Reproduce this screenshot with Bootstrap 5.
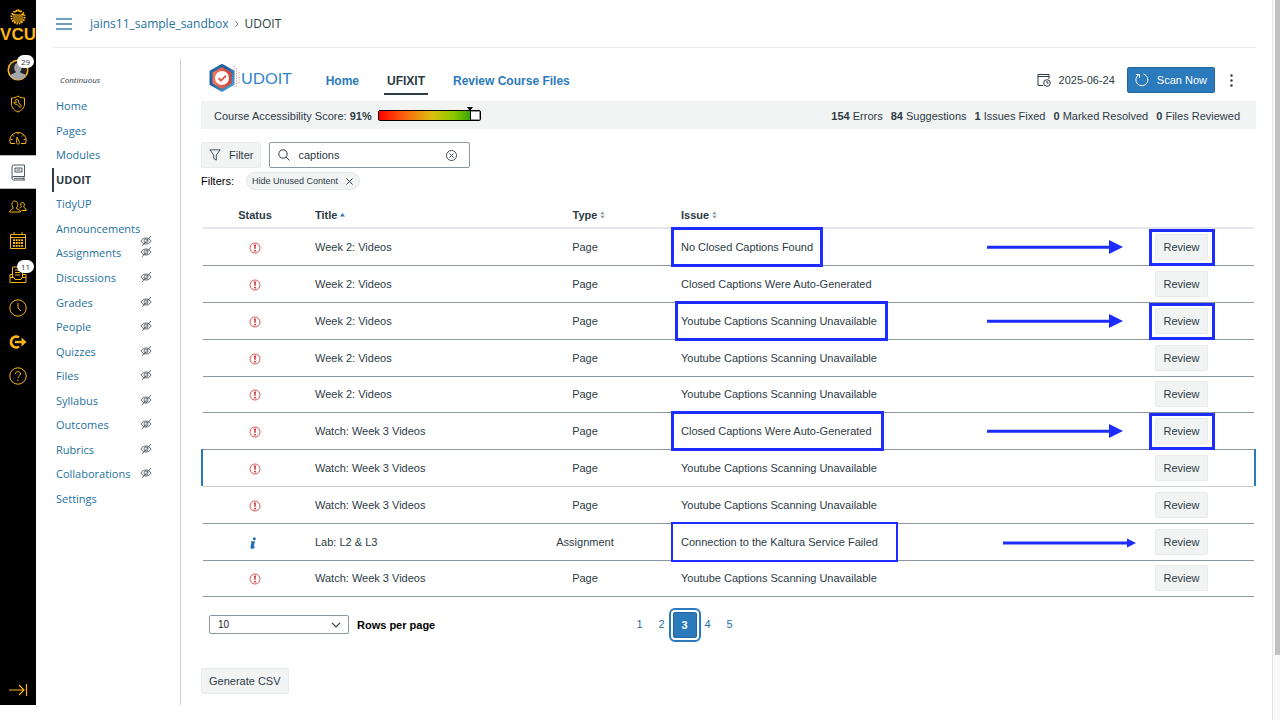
<!DOCTYPE html>
<html lang="en">
<head>
<meta charset="utf-8">
<meta name="viewport" content="width=device-width, initial-scale=1">
<title>UDOIT</title>
<link href="https://cdn.jsdelivr.net/npm/bootstrap@5.3.0/dist/css/bootstrap.min.css" rel="stylesheet">
<style>
:root{--ink:#2d3b45;--link:#25719f;--brand:#2b7abc;--gold:#fdb515;--soft:#f2f4f4;--callout:#1d2cff}
body{font-family:"Liberation Sans",Arial,sans-serif;font-size:11px;line-height:16px;color:var(--ink);background:#fff}
a{text-decoration:none;color:var(--link)}
svg{display:block;flex:none}
.shell{height:calc(100vh - 15px)}
.rail{width:36px;background:#000;color:var(--gold)}
.rail a{height:34px;color:inherit}
.rail .crest{height:52px;padding-top:9px}
.rail .avatar{height:35px}
.rail .current{background:#fff;color:#4c5660;border-block:1px solid #bbb}
.rail .expand{height:30px}
.count{top:3px;left:17px;width:17px;height:13px;border-radius:7px;background:#fff;color:#333;font:8px/13px "Open Sans",sans-serif;text-align:center}
.crumbs{height:48px;margin:0 16px;border-bottom:1px solid #e8eaec;font:12px/18px "Open Sans",sans-serif;gap:18px}
.trail{gap:6px}
.menu{width:145px;margin-top:11px;border-right:1px solid #c7cdd1;font:11px/24px "Open Sans",sans-serif;padding-left:16px}
.term{font-size:8px;line-height:14px;padding:14px 0 7px 8px}
.links{min-height:417px}
.links li{height:24px;padding-left:4px;padding-right:28px}
.links li svg{margin-bottom:2px}
.links .here{border-left:2px solid var(--ink);padding-left:2px}
.links .here a{color:var(--ink);font-weight:700}
.links .low svg{margin-top:26px}
.stage{padding:11px 16px 0 20px}
.tabs{height:42px}
.views{gap:22px;padding-left:27px}
.wordmark{font:16px/22px Lato,sans-serif;color:#2f86cc}
.tab{font-size:12px;font-weight:700;line-height:16px;padding:4px 3px;border-bottom:2px solid transparent;color:var(--brand)}
.tab.on{color:var(--ink);border-color:var(--ink)}
.btn{--bs-btn-font-size:11px;--bs-btn-line-height:16px;--bs-btn-padding-y:4px;--bs-btn-padding-x:7px;--bs-btn-border-radius:2px}
.btn-soft{--bs-btn-bg:var(--soft);--bs-btn-color:var(--ink);--bs-btn-border-color:#e8ebec;--bs-btn-hover-bg:#e6eaea;--bs-btn-hover-color:var(--ink)}
.btn-scan{--bs-btn-bg:var(--brand);--bs-btn-color:#fff;--bs-btn-border-color:#2368a3;--bs-btn-hover-bg:#2368a3;--bs-btn-hover-color:#fff}
.scorebar{height:28px;background:var(--soft);padding:2px 16px 0 13px;gap:6px}
.tallies{gap:8px}
.gauge{width:103px;height:11px;margin-bottom:2px;border:1px solid #000;border-radius:2px;background:#fff;box-shadow:inset 0 0 0 1px #0006}
.gauge-fill{height:100%;border-right:1px solid #000;background:linear-gradient(90deg,#f00,#fa6a10 30%,#dcc010 58%,#8cc800 82%,#3ba800)}
.gauge-pin{top:-4px;margin-left:-4px;border:3px solid transparent;border-top:4px solid #000;border-bottom:0}
.finder{padding-top:13px}
.search{width:201px;height:26px;border:1px solid #8b969e;border-radius:2px;padding:0 12px 0 8px}
.search input{font-size:11px;color:var(--ink);outline:0;min-width:0}
.pill{height:18px;border-radius:9px;border:1px solid #e4e8e8;background:var(--soft);font-size:9px;line-height:16px;padding:0 6px 0 5px;color:var(--ink)}
.issues{table-layout:fixed;margin:13px 2px 0;width:calc(100% - 4px)}
.issues th{height:25px;padding:0 8px;border-bottom:2px solid #e4e5ea;vertical-align:middle}
.issues td{height:37px;padding:0 8px;border-bottom:1px solid #8b969e;vertical-align:middle}
.issues tr:nth-child(5n) td{height:36px}
.issues .issue{padding-left:10px}
.issues .picked td{border-bottom-color:#c7cdd1}
.issues .picked td:first-child{box-shadow:-2px 0 var(--brand)}
.issues .picked td:last-child{box-shadow:2px 0 var(--brand)}
.sorter{display:inline-block;width:5px;margin:0 -8px 0 3px;vertical-align:0}
.issues .flag{margin:2px auto 0}
.callout{border:3px solid var(--callout);pointer-events:none}
.around-text{inset:-2px auto -2px 0}
.around-button{inset:0 39px -1px 40px}
.arrow{right:-14px;top:11px}
.arrow.low{right:-27px;top:12px}
.foot{margin-top:15px}
.rows-select{width:140px;height:19px;border:1px solid #8b969e;border-radius:2px;font-size:10px;line-height:17px;padding:0 8px;background-size:10px;background-position:right 7px center}
.pages a{width:22px;font-size:11px;line-height:24px;text-align:center}
.pages .on{width:24px;background:var(--brand);color:#fff;font-weight:700;border-radius:2px;outline:2px solid var(--brand);outline-offset:2px;border:1px solid #2368a3}
.export{margin-top:30px}
.track{width:8px;border-left:1px solid #e4e4e4;background:#fafafa;padding-left:2px;height:100vh}
.thumb{height:91vh;background:#c1c1c1}
</style>
</head>
<body>
<svg width="0" height="0" class="position-absolute" aria-hidden="true">
 <symbol id="bang" viewBox="0 0 12 12"><circle cx="6" cy="6" r="5" fill="none" stroke="#d64545" stroke-width=".9"/><path d="M5.1 2.6h1.8L6.5 7h-1z" fill="#c81e2b"/><circle cx="6" cy="8.7" r=".9" fill="#c81e2b"/></symbol>
 <symbol id="hidden" viewBox="0 0 12 12"><path d="M1 6c2-4 8-4 10 0-2 4-8 4-10 0zM2 11 11 1" fill="none" stroke="#3d4a54" stroke-width=".8"/><circle cx="6" cy="6" r="2" fill="none" stroke="#3d4a54" stroke-width=".8"/></symbol>
 <symbol id="updown" viewBox="0 0 5 8"><path d="M.3 3.2 2.5.5l2.2 2.7zM.3 4.8l2.2 2.7 2.2-2.7z" fill="#8b969e"/></symbol>
 <symbol id="pointer" viewBox="0 0 136 14"><path d="M0 7.300h124" stroke="#1d2cff" stroke-width="3"/><path d="M122 0v14l14-7z" fill="#1d2cff"/></symbol>
</svg>
<div class="d-flex">
<div class="shell d-flex flex-grow-1">
 <nav class="rail d-flex flex-column flex-shrink-0" aria-label="Global">
  <a class="crest" href="#" aria-label="VCU home"><svg width="36" height="34" viewBox="0 0 36 34" fill="none" stroke="#fdb515"><circle cx="18" cy="8" r="6.500" stroke-width="2" stroke-dasharray="1.500 1"/><path d="M12 5.500h3M21 5.500h3M14 6v6c1 2 2 2 2 0V5M18 5v9M20 5v7c1 2 2 1 2-1V6M15 3l3-2 3 2" stroke-width="1.200"/><text x="18" y="31" text-anchor="middle" fill="#fdb515" stroke="none" font-family="Liberation Sans" font-weight="700" font-size="17">VCU</text></svg></a>
  <a class="avatar position-relative d-flex align-items-center justify-content-center" href="#" aria-label="Account"><svg width="22" height="22" viewBox="0 0 22 22"><circle cx="11" cy="11" r="9.800" fill="#222" stroke="#fdb515" stroke-width="1.500"/><path d="M3 17c1-3 5-2 6-4-3-3-2-9 2-9s5 6 2 9c1 2 5 1 6 4-4 5-12 5-16 0z" fill="#a5a7aa"/></svg><span class="count position-absolute">29</span></a>
  <a class="d-flex align-items-center justify-content-center" href="#" aria-label="Admin"><svg width="16" height="18" viewBox="0 0 16 18" fill="none" stroke="currentColor"><path d="M8 1c2 1.500 4 2 6.500 2v6c0 4-3 6.500-6.500 8-3.500-1.500-6.500-4-6.500-8V3C4 3 6 2.500 8 1z"/><path d="M5 5.500a2 2 0 0 1 3.500 2l3 3.500-1.500 1.500-3.200-3.300A2 2 0 0 1 4 7l1.500 1 1-1z"/></svg></a>
  <a class="d-flex align-items-center justify-content-center" href="#" aria-label="Dashboard"><svg width="18" height="14" viewBox="0 0 18 14" fill="none" stroke="currentColor"><path d="M6 12.500H1.500C-1 6 4 1.500 9 1.500s10 4.500 7.500 11H12M8 6l-.5 5.500c0 2 3 2 3 0zM9 1.500v2M3.500 4l1.500 1.500M1.500 8.500h2M14.500 8.500h2M13 5.500 14.500 4"/></svg></a>
  <a class="current d-flex align-items-center justify-content-center" href="#" aria-label="Courses"><svg width="15" height="17" viewBox="0 0 15 17" fill="none" stroke="currentColor"><path d="M13.500 12.500V1H3Q1 1 1 3v11M13.500 12.500H3Q1 12.500 1 14.300T3 16h11M13 12.500V16M4 4h7v4H4zM5.500 6h4M3 14.300h10"/></svg></a>
  <a class="d-flex align-items-center justify-content-center" href="#" aria-label="Groups"><svg width="18" height="13" viewBox="0 0 18 13" fill="none" stroke="currentColor"><path d="M.6 12c0-3 3.400-2 3.600-4C2 5 3 1 5.800 1s4 4 1.700 7c0 2 4 1 4 4zM10.500 8c1.500-.5 2-.7 2-1.500C11 5 11.500 2.500 13.500 2.500s2.500 2.500 1.200 4c0 2 2.700 1.500 2.700 4h-5"/></svg></a>
  <a class="d-flex align-items-center justify-content-center" href="#" aria-label="Calendar"><svg width="16" height="17" viewBox="0 0 16 17" fill="none" stroke="currentColor"><path d="M.5 2.500h15v14H.5zM.5 5.500h15M4 0v3M12 0v3"/><path d="M3 8.200h10M3 11h10M3 13.800h10" stroke-width="1.800" stroke-dasharray="2 .7"/></svg></a>
  <a class="position-relative d-flex align-items-center justify-content-center" href="#" aria-label="Inbox"><svg width="18" height="17" viewBox="0 0 18 17" fill="none" stroke="currentColor"><path d="M3.500 11V1h10v10M1 8.500v8h16v-8h-3.500M3.500 8.500H1M1 11.500h4l1 2h6l1-2h4M6 4h5M6 6.500h5M6 9h5"/></svg><span class="count position-absolute">11</span></a>
  <a class="d-flex align-items-center justify-content-center" href="#" aria-label="History"><svg width="18" height="18" viewBox="0 0 18 18" fill="none" stroke="currentColor"><circle cx="9" cy="9" r="8.200"/><path d="M9 4v5l3 3"/></svg></a>
  <a class="d-flex align-items-center justify-content-center" href="#" aria-label="Commons"><svg width="18" height="14" viewBox="0 0 18 14" fill="none" stroke="currentColor"><path d="M10 2.500C7 .3 2 2 2 7s5 6.700 8 4.500" stroke-width="2.600"/><path d="M6 7h8" stroke-width="2.400"/><path d="M12.500 2.500 17.500 7l-5 4.500z" fill="currentColor" stroke="none"/></svg></a>
  <a class="d-flex align-items-center justify-content-center" href="#" aria-label="Help"><svg width="18" height="18" viewBox="0 0 18 18" fill="none" stroke="currentColor"><circle cx="9" cy="9" r="8.200"/><path d="M6.500 7C6.500 3.500 11.500 4 11.500 7c0 2-2.500 2-2.500 4M9 12.500V14"/></svg></a>
  <a class="expand mt-auto d-flex align-items-center justify-content-center" href="#" aria-label="Expand navigation"><svg width="19" height="14" viewBox="0 0 19 14" fill="none" stroke="currentColor" stroke-width="1.200"><path d="M0 7h15M10 2l5 5-5 5M17.500 1v12"/></svg></a>
 </nav>
 <div class="flex-grow-1 d-flex flex-column">
  <header class="crumbs d-flex align-items-center">
   <a href="#" class="ms-1" aria-label="Course menu"><svg width="16" height="12" viewBox="0 0 16 12"><path d="M0 1h16M0 6h16M0 11h16" stroke="#3c83ab" stroke-width="1.400"/></svg></a>
   <nav class="trail d-flex align-items-center" aria-label="breadcrumb"><a href="#">jains11_sample_sandbox</a><svg width="4" height="6" viewBox="0 0 4 6"><path d="m.5.500 2.500 2.500L.5 5.500" fill="none" stroke="#6b7780"/></svg><span>UDOIT</span></nav>
  </header>
  <div class="d-flex flex-grow-1">
   <nav class="menu flex-shrink-0" aria-label="Course">
    <div class="term fst-italic">Continuous</div>
    <ul class="links list-unstyled m-0 d-flex flex-column justify-content-between">
     <li><a href="#">Home</a></li>
     <li><a href="#">Pages</a></li>
     <li><a href="#">Modules</a></li>
     <li class="here"><a href="#">UDOIT</a></li>
     <li><a href="#">TidyUP</a></li>
     <li class="low d-flex justify-content-between align-items-center"><a href="#">Announcements</a><svg width="12" height="12"><use href="#hidden"/></svg></li>
     <li class="d-flex justify-content-between align-items-center"><a href="#">Assignments</a><svg width="12" height="12"><use href="#hidden"/></svg></li>
     <li class="d-flex justify-content-between align-items-center"><a href="#">Discussions</a><svg width="12" height="12"><use href="#hidden"/></svg></li>
     <li class="d-flex justify-content-between align-items-center"><a href="#">Grades</a><svg width="12" height="12"><use href="#hidden"/></svg></li>
     <li class="d-flex justify-content-between align-items-center"><a href="#">People</a><svg width="12" height="12"><use href="#hidden"/></svg></li>
     <li class="d-flex justify-content-between align-items-center"><a href="#">Quizzes</a><svg width="12" height="12"><use href="#hidden"/></svg></li>
     <li class="d-flex justify-content-between align-items-center"><a href="#">Files</a><svg width="12" height="12"><use href="#hidden"/></svg></li>
     <li class="d-flex justify-content-between align-items-center"><a href="#">Syllabus</a><svg width="12" height="12"><use href="#hidden"/></svg></li>
     <li class="d-flex justify-content-between align-items-center"><a href="#">Outcomes</a><svg width="12" height="12"><use href="#hidden"/></svg></li>
     <li class="d-flex justify-content-between align-items-center"><a href="#">Rubrics</a><svg width="12" height="12"><use href="#hidden"/></svg></li>
     <li class="d-flex justify-content-between align-items-center"><a href="#">Collaborations</a><svg width="12" height="12"><use href="#hidden"/></svg></li>
     <li><a href="#">Settings</a></li>
    </ul>
   </nav>
   <main class="stage flex-grow-1">
    <div class="tabs d-flex align-items-center">
     <a href="#" class="d-flex align-items-center ms-2 mb-1" aria-label="UDOIT"><svg width="32" height="30" viewBox="0 0 32 30"><defs><linearGradient id="rim" x2="1" y2="1"><stop stop-color="#2a6fae"/><stop offset=".4" stop-color="#1f5d9c"/><stop offset="1" stop-color="#4db4e6"/></linearGradient><linearGradient id="core" x2="1"><stop stop-color="#ef7b5c"/><stop offset="1" stop-color="#cf3f38"/></linearGradient></defs><path d="M25 3v22M27.500 5v20M30 9v12" stroke="#ef7f7b" stroke-width="1" stroke-dasharray="1 1.500"/><path d="m13 .8 12.500 7v14L13 29 .5 21.800v-14z" fill="url(#rim)"/><path d="m13 4 9.500 5.500v11L13 26l-9.500-5.500v-11z" fill="url(#core)"/><circle cx="13" cy="15" r="7" fill="#fff"/><path d="m9.500 15.200 2.500 2.500 5-5" fill="none" stroke="#e0533f" stroke-width="1.800"/></svg><span class="wordmark">UDOIT</span></a>
     <nav class="views d-flex pt-1" aria-label="Views"><a class="tab ms-1" href="#">Home</a><a class="tab on" href="#" aria-current="page">UFIXIT</a><a class="tab" href="#">Review Course Files</a></nav>
     <div class="d-flex align-items-center ms-auto">
      <svg class="me-1" width="14" height="14" viewBox="0 0 14 14" fill="none" stroke="#2d3b45"><path d="M6 12.500H1V1.500h11V6M1 3.500h11"/><circle cx="10" cy="10" r="3.300"/><path d="M10 8v2h1.500"/></svg>
      <span class="me-2 ps-1">2025-06-24</span>
      <button type="button" class="btn btn-scan d-flex align-items-center gap-1 ms-1"><svg class="me-1" width="14" height="14" viewBox="0 0 14 14" fill="none" stroke="#fff"><path d="M4 1.500A6 6 0 1 0 8.500 1M1 1.500h3.500V5"/></svg>Scan Now</button>
      <button type="button" class="btn border-0 ms-2 me-3" aria-label="More options"><svg width="3" height="13" viewBox="0 0 3 13" fill="#2d3b45"><circle cx="1.500" cy="1.500" r="1.200"/><circle cx="1.500" cy="6.500" r="1.200"/><circle cx="1.500" cy="11.500" r="1.200"/></svg></button>
     </div>
    </div>
    <div class="scorebar d-flex align-items-center">
     <span>Course Accessibility Score: <b>91%</b></span>
     <div class="gauge position-relative"><div class="gauge-fill" style="width:91%"></div><i class="gauge-pin position-absolute" style="left:91%"></i></div>
     <div class="tallies d-flex ms-auto"><span><b>154</b> Errors</span><span><b>84</b> Suggestions</span><span><b>1</b> Issues Fixed</span><span><b>0</b> Marked Resolved</span><span><b>0</b> Files Reviewed</span></div>
    </div>
    <div class="finder d-flex gap-2">
     <button type="button" class="btn btn-soft d-flex align-items-center gap-2"><svg width="12" height="14" viewBox="0 0 14 14" fill="none" stroke="#2d3b45"><path d="M1 1h12L8.500 7v6l-3-2V7z"/></svg>Filter</button>
     <label class="search d-flex align-items-center gap-2"><svg width="12" height="12" viewBox="0 0 12 12" fill="none" stroke="#2d3b45"><circle cx="5" cy="5" r="4.200"/><path d="m8 8 3.500 3.500"/></svg><input class="border-0 p-0 flex-grow-1" type="text" value="captions" aria-label="Search"><svg width="11" height="11" viewBox="0 0 11 11" fill="none" stroke="#2d3b45" stroke-width=".9"><circle cx="5.500" cy="5.500" r="5"/><path d="m3.500 3.500 4 4m0-4-4 4"/></svg></label>
    </div>
    <div class="d-flex align-items-center gap-2 mt-1"><span class="text-black me-1">Filters:</span><button type="button" class="pill d-flex align-items-center gap-2">Hide Unused Content<svg width="7" height="7" viewBox="0 0 7 7"><path d="m.5.500 6 6m0-6-6 6" stroke="#2d3b45"/></svg></button></div>
    <table class="issues">
     <colgroup><col style="width:104px"><col style="width:192px"><col style="width:172px"><col><col style="width:145px"></colgroup>
     <thead><tr><th class="text-center">Status</th><th>Title<svg class="sorter" width="5" height="8" viewBox="0 0 5 8"><path d="M0 5.500 2.500 2 5 5.500z" fill="#2b7abc"/></svg></th><th class="text-center">Type<svg class="sorter" width="5" height="8"><use href="#updown"/></svg></th><th class="issue">Issue<svg class="sorter" width="5" height="8"><use href="#updown"/></svg></th><th aria-label="Actions"></th></tr></thead>
     <tbody>
      <tr><td><svg class="flag" width="12" height="12"><use href="#bang"/></svg></td><td>Week 2: Videos</td><td class="text-center">Page</td><td class="issue position-relative">No Closed Captions Found<i class="callout around-text position-absolute" style="width:152px"></i><svg class="arrow position-absolute" width="136" height="14"><use href="#pointer"/></svg></td><td class="text-center position-relative"><button type="button" class="btn btn-soft">Review</button><i class="callout around-button position-absolute"></i></td></tr>
      <tr><td><svg class="flag" width="12" height="12"><use href="#bang"/></svg></td><td>Week 2: Videos</td><td class="text-center">Page</td><td class="issue">Closed Captions Were Auto-Generated</td><td class="text-center"><button type="button" class="btn btn-soft">Review</button></td></tr>
      <tr><td><svg class="flag" width="12" height="12"><use href="#bang"/></svg></td><td>Week 2: Videos</td><td class="text-center">Page</td><td class="issue position-relative">Youtube Captions Scanning Unavailable<i class="callout around-text position-absolute ms-1" style="width:213px"></i><svg class="arrow position-absolute" width="136" height="14"><use href="#pointer"/></svg></td><td class="text-center position-relative"><button type="button" class="btn btn-soft">Review</button><i class="callout around-button position-absolute"></i></td></tr>
      <tr><td><svg class="flag" width="12" height="12"><use href="#bang"/></svg></td><td>Week 2: Videos</td><td class="text-center">Page</td><td class="issue">Youtube Captions Scanning Unavailable</td><td class="text-center"><button type="button" class="btn btn-soft">Review</button></td></tr>
      <tr><td><svg class="flag" width="12" height="12"><use href="#bang"/></svg></td><td>Week 2: Videos</td><td class="text-center">Page</td><td class="issue">Youtube Captions Scanning Unavailable</td><td class="text-center"><button type="button" class="btn btn-soft">Review</button></td></tr>
      <tr><td><svg class="flag" width="12" height="12"><use href="#bang"/></svg></td><td>Watch: Week 3 Videos</td><td class="text-center">Page</td><td class="issue position-relative">Closed Captions Were Auto-Generated<i class="callout around-text position-absolute" style="width:213px"></i><svg class="arrow position-absolute" width="136" height="14"><use href="#pointer"/></svg></td><td class="text-center position-relative"><button type="button" class="btn btn-soft">Review</button><i class="callout around-button position-absolute"></i></td></tr>
      <tr class="picked"><td><svg class="flag" width="12" height="12"><use href="#bang"/></svg></td><td>Watch: Week 3 Videos</td><td class="text-center">Page</td><td class="issue">Youtube Captions Scanning Unavailable</td><td class="text-center"><button type="button" class="btn btn-soft">Review</button></td></tr>
      <tr><td><svg class="flag" width="12" height="12"><use href="#bang"/></svg></td><td>Watch: Week 3 Videos</td><td class="text-center">Page</td><td class="issue">Youtube Captions Scanning Unavailable</td><td class="text-center"><button type="button" class="btn btn-soft">Review</button></td></tr>
      <tr><td><svg class="flag" width="12" height="12" viewBox="0 0 12 12" fill="#1f6fae"><path d="M2 4.300h4L4.800 9.500q.2.500 1.400-.3Q5.500 12 3 12 1 12 1.500 9.800L2.500 5.500H2z"/><circle cx="5.300" cy="1.800" r="1.500"/></svg></td><td>Lab: L2 &amp; L3</td><td class="text-center">Assignment</td><td class="issue position-relative">Connection to the Kaltura Service Failed<i class="callout around-text position-absolute" style="width:227px;border-width:2px"></i><svg class="arrow low position-absolute" width="133" height="14" viewBox="0 0 133 14"><path d="M0 7h126" stroke="#1d2cff" stroke-width="3"/><path d="M124 2.500v9l9-4.500z" fill="#1d2cff"/></svg></td><td class="text-center"><button type="button" class="btn btn-soft">Review</button></td></tr>
      <tr><td><svg class="flag" width="12" height="12"><use href="#bang"/></svg></td><td>Watch: Week 3 Videos</td><td class="text-center">Page</td><td class="issue">Youtube Captions Scanning Unavailable</td><td class="text-center"><button type="button" class="btn btn-soft">Review</button></td></tr>
     </tbody>
    </table>
    <div class="foot row g-0 align-items-center">
     <div class="col-4 d-flex align-items-center ps-2 gap-2"><select id="rows" class="rows-select form-select"><option>10</option></select><label for="rows" class="fw-bold text-black">Rows per page</label></div>
     <nav class="col-3 d-flex justify-content-center pages" aria-label="Pages"><a href="#">1</a><a href="#">2</a><a class="on" href="#" aria-current="page">3</a><a href="#">4</a><a href="#">5</a></nav>
    </div>
    <button type="button" class="btn btn-soft export">Generate CSV</button>
   </main>
  </div>
 </div>
</div>
<div class="track flex-shrink-0" aria-hidden="true"><div class="thumb"></div></div>
</div>
<script src="https://cdn.jsdelivr.net/npm/bootstrap@5.3.0/dist/js/bootstrap.bundle.min.js"></script>
</body>
</html>
